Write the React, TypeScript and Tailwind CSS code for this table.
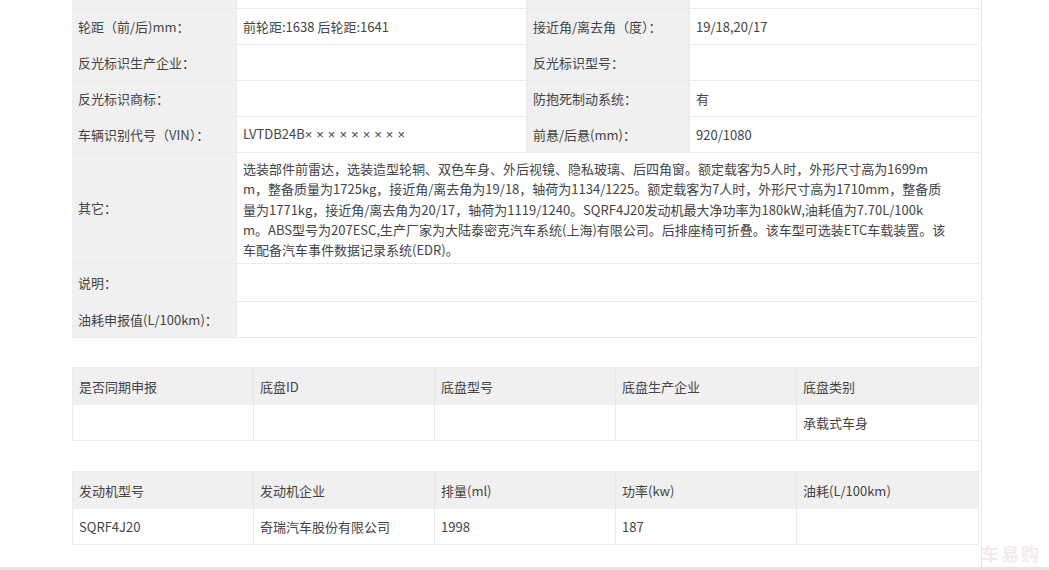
import React from 'react';

const font = { fontFamily: '"Noto Sans CJK SC", "Liberation Sans", sans-serif' };

type Pair = [React.ReactNode, React.ReactNode, React.ReactNode, React.ReactNode];

const vin = (
  <span>
    LVTDB24B<span className="tracking-[4px]" style={{ fontFamily: '"Liberation Sans", sans-serif' }}>×××××××××</span>
  </span>
);

const specRows: Pair[] = [
  ['轮距（前/后)mm：', '前轮距:1638 后轮距:1641', '接近角/离去角（度）：', '19/18,20/17'],
  ['反光标识生产企业：', '', '反光标识型号：', ''],
  ['反光标识商标：', '', '防抱死制动系统：', '有'],
  ['车辆识别代号（VIN）：', vin, '前悬/后悬(mm)：', '920/1080'],
];

const otherLines = [
  '选装部件前雷达，选装造型轮辋、双色车身、外后视镜、隐私玻璃、后四角窗。额定载客为5人时，外形尺寸高为1699m',
  'm，整备质量为1725kg，接近角/离去角为19/18，轴荷为1134/1225。额定载客为7人时，外形尺寸高为1710mm，整备质',
  '量为1771kg，接近角/离去角为20/17，轴荷为1119/1240。SQRF4J20发动机最大净功率为180kW,油耗值为7.70L/100k',
  'm。ABS型号为207ESC,生产厂家为大陆泰密克汽车系统(上海)有限公司。后排座椅可折叠。该车型可选装ETC车载装置。该',
  '车配备汽车事件数据记录系统(EDR)。',
];

const SpecRow = ({ row }: { row: Pair }) => (
  <div className="flex h-[36px] shrink-0 border-b border-[#ebebeb]">
    <div className="w-[165px] shrink-0 bg-[#f0f0f0] px-[6px] flex items-center border-r border-[#ebebeb]">{row[0]}</div>
    <div className="w-[290px] shrink-0 px-[6px] flex items-center border-r border-[#ebebeb]">{row[1]}</div>
    <div className="w-[163px] shrink-0 bg-[#f0f0f0] px-[6px] flex items-center border-r border-[#ebebeb]">{row[2]}</div>
    <div className="flex-1 px-[6px] flex items-center">{row[3]}</div>
  </div>
);

const WideRow = ({ label, h, children }: { label: string; h: string; children?: React.ReactNode }) => (
  <div className={`flex shrink-0 border-b border-[#ebebeb] ${h}`}>
    <div className="w-[165px] shrink-0 bg-[#f0f0f0] px-[6px] flex items-center border-r border-[#ebebeb]">{label}</div>
    <div className="flex-1 px-[6px]">{children}</div>
  </div>
);

const GridTable = ({ head, body }: { head: string[]; body: string[] }) => (
  <div className="border border-[#ebebeb]">
    <div className="grid grid-cols-5 h-[37px] bg-[#f0f0f0]">
      {head.map((h, i) => (
        <div key={i} className="px-[6px] flex items-center border-r border-[#e6e6e6] last:border-r-0">{h}</div>
      ))}
    </div>
    <div className="grid grid-cols-5 h-[35px]">
      {body.map((b, i) => (
        <div key={i} className="px-[6px] flex items-center border-r border-[#ebebeb] last:border-r-0">{b}</div>
      ))}
    </div>
  </div>
);

export default function App() {
  return (
    <div className="relative w-[1049px] h-[570px] overflow-hidden bg-white text-[13px] text-[#444]" style={font}>
      <div className="flex flex-col w-[982px] h-[567px] pl-[72px] pr-[2px] border-r border-[#e6e6e6] overflow-hidden">
        {/* spec table */}
        <div className="flex flex-col shrink-0 -mt-[27px]">
          <SpecRow row={['产品商标：', '', '', '']} />
          {specRows.map((r, i) => (
            <SpecRow key={i} row={r} />
          ))}
          <WideRow label="其它：" h="h-[111px]">
            <div className="pt-[6px] leading-[20.3px] whitespace-nowrap">
              {otherLines.map((l, i) => (
                <span key={i} className="block">{l}</span>
              ))}
            </div>
          </WideRow>
          <WideRow label="说明：" h="h-[38px]" />
          <WideRow label="油耗申报值(L/100km)：" h="h-[36px]" />
        </div>

        {/* chassis */}
        <div className="mt-[29px] shrink-0">
          <GridTable
            head={['是否同期申报', '底盘ID', '底盘型号', '底盘生产企业', '底盘类别']}
            body={['', '', '', '', '承载式车身']}
          />
        </div>

        {/* engine */}
        <div className="mt-[30px] shrink-0">
          <GridTable
            head={['发动机型号', '发动机企业', '排量(ml)', '功率(kw)', '油耗(L/100km)']}
            body={['SQRF4J20', '奇瑞汽车股份有限公司', '1998', '187', '']}
          />
        </div>
      </div>
      <div className="h-[3px] bg-[#e4e4e4]" />
      <div className="absolute right-[8px] bottom-[3px] text-[18px] font-bold tracking-[2px] text-[#f3ebeb]">车易购</div>
    </div>
  );
}
